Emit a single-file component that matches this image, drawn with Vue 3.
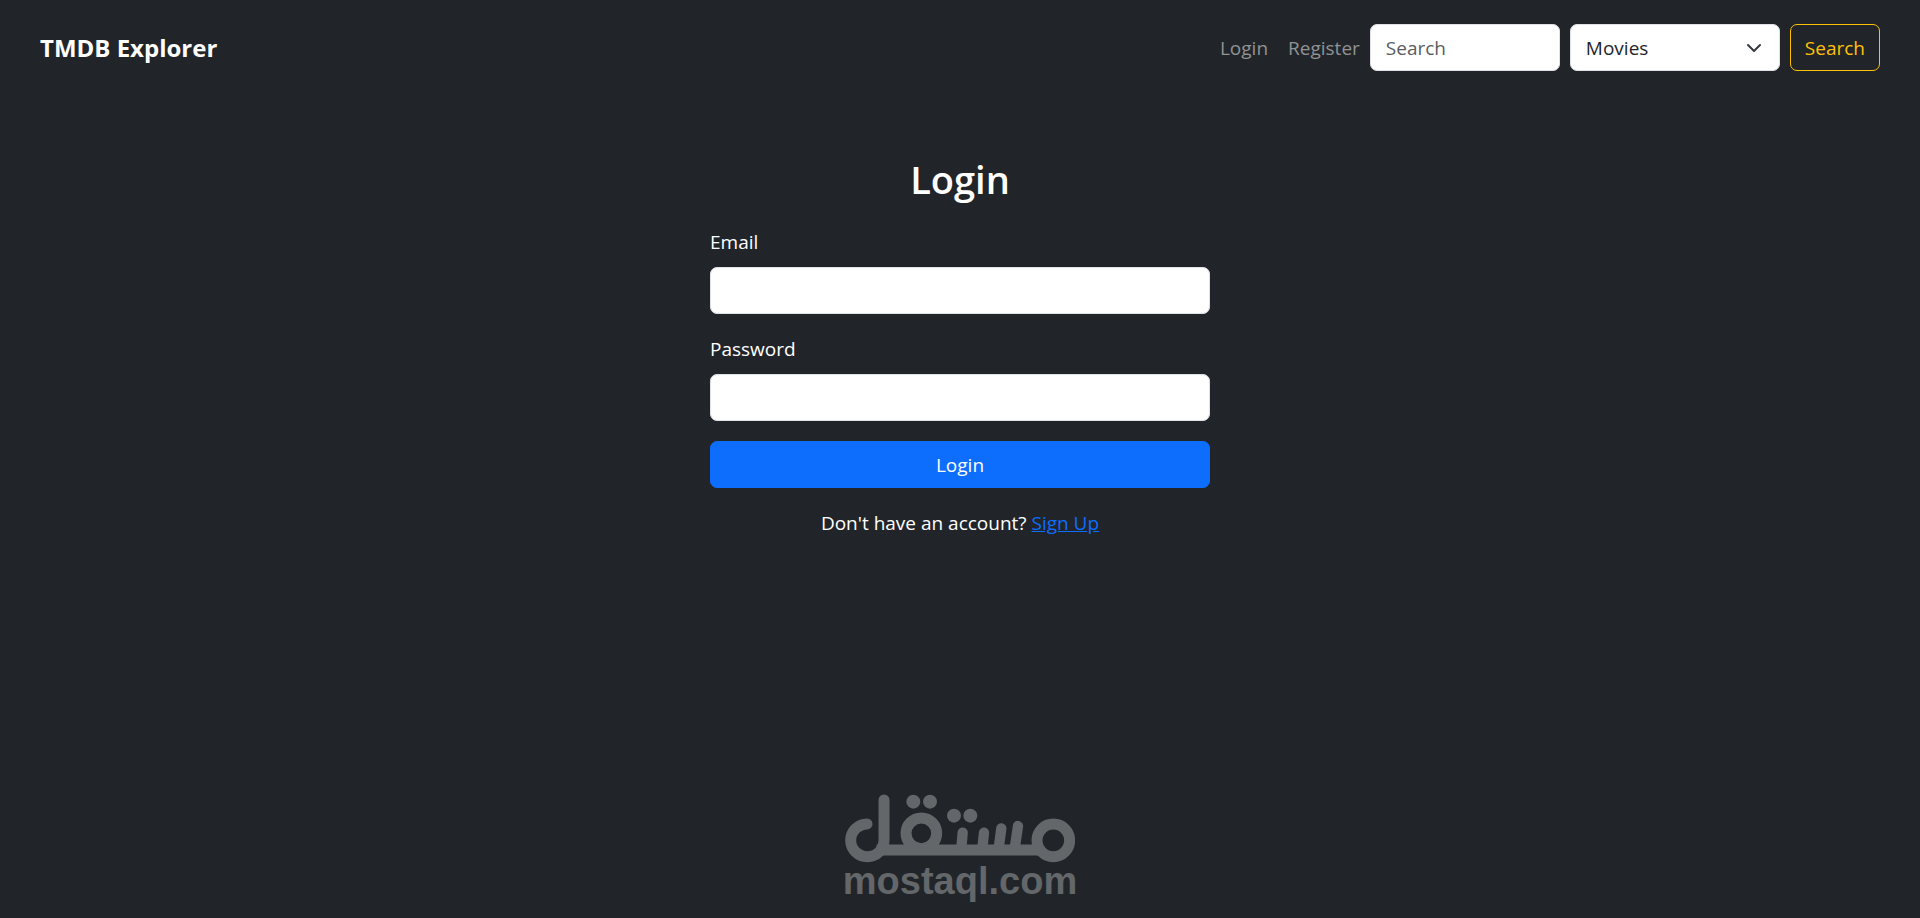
<script setup>
import { ref } from 'vue'

const query = ref('')
const kind = ref('movie')
const email = ref('')
const password = ref('')
</script>

<template>
  <div class="page">
    <header class="navbar">
      <a class="brand" href="#">TMDB Explorer</a>
      <nav class="links">
        <a href="#login">Login</a>
        <a href="#register">Register</a>
      </nav>
      <form class="search" @submit.prevent>
        <input v-model="query" class="control query" type="search" placeholder="Search" aria-label="Search" />
        <div class="select-wrap">
          <select v-model="kind" class="control kind" aria-label="Search type">
            <option value="movie">Movies</option>
            <option value="tv">TV Shows</option>
          </select>
          <svg class="chevron" viewBox="0 0 16 16" aria-hidden="true">
            <path d="m2 5 6 6 6-6" />
          </svg>
        </div>
        <button class="btn btn-outline" type="submit">Search</button>
      </form>
    </header>

    <main class="login">
      <h2>Login</h2>
      <form @submit.prevent>
        <div class="field">
          <label for="email">Email</label>
          <input id="email" v-model="email" class="control" type="email" />
        </div>
        <div class="field">
          <label for="password">Password</label>
          <input id="password" v-model="password" class="control" type="password" />
        </div>
        <button class="btn btn-primary" type="submit">Login</button>
      </form>
      <p>Don't have an account? <a href="#register">Sign Up</a></p>
    </main>

    <footer class="mark">
      <svg viewBox="45 40 690 206" role="img" aria-label="مستقل">
        <g class="strokes">
          <path d="M111 130A50 49 0 1 0 162 179V58" />
          <path class="base" d="M140 208H632" />
          <circle cx="670" cy="179" r="49" />
          <circle cx="274" cy="158" r="46" />
          <path class="tooth" d="M398 156l-4 48M462 156l-5 48M514 143l-8 61M564 136l-10 68" />
        </g>
        <g class="dots">
          <circle cx="250" cy="63" r="21" />
          <circle cx="300" cy="63" r="21" />
          <circle cx="372" cy="105" r="21" />
          <circle cx="421" cy="105" r="21" />
        </g>
      </svg>
      <span>mostaql.com</span>
    </footer>
  </div>
</template>

<style>
body {
  margin: 0;
  background: #212529;
}
</style>

<style scoped>
.page {
  box-sizing: border-box;
  display: flex;
  flex-direction: column;
  min-height: 100vh;
  background: #212529;
  color: #fff;
  font-family: "Segoe UI", "Open Sans", "Noto Sans", sans-serif;
  font-size: 19px;
  line-height: 30px;
}

.navbar {
  display: flex;
  align-items: center;
  padding: 24px 40px;
}

.brand {
  margin-right: auto;
  color: #fff;
  font-size: 24px;
  font-weight: 700;
  text-decoration: none;
}

.links {
  display: flex;
  gap: 20px;
  margin-right: 10px;
}

.links a {
  color: #909294;
  text-decoration: none;
}

.search {
  display: flex;
  gap: 10px;
}

.control {
  box-sizing: border-box;
  display: block;
  width: 100%;
  height: 47px;
  margin: 0;
  padding: 0 15px;
  border: 1px solid #dee2e6;
  border-radius: 7px;
  background: #fff;
  color: #212529;
  font: inherit;
  appearance: none;
}

.control::placeholder {
  color: #595c5f;
  opacity: 1;
}

.query {
  width: 190px;
}

.select-wrap {
  position: relative;
  width: 210px;
}

.chevron {
  position: absolute;
  top: 16px;
  right: 18px;
  width: 16px;
  height: 16px;
  fill: none;
  stroke: #343a40;
  stroke-width: 2;
  stroke-linecap: round;
  stroke-linejoin: round;
  pointer-events: none;
}

.btn {
  height: 47px;
  padding: 0 14px;
  border: 1px solid;
  border-radius: 7px;
  font: inherit;
  cursor: pointer;
}

.btn-outline {
  border-color: #ffc107;
  background: transparent;
  color: #ffc107;
}

.btn-primary {
  display: block;
  width: 100%;
  border-color: #0d6efd;
  background: #0d6efd;
  color: #fff;
}

.login {
  width: 100%;
  max-width: 500px;
  margin: 60px auto 0;
}

.login h2 {
  margin: 0 0 24px;
  font-size: 38px;
  font-weight: 600;
  line-height: 48px;
  text-align: center;
}

.field {
  margin-bottom: 20px;
}

.field label {
  display: block;
  margin-bottom: 10px;
}

.login p {
  margin: 20px 0;
  text-align: center;
}

.login a {
  color: #0d6efd;
  text-decoration: underline;
}

.mark {
  display: flex;
  flex-direction: column;
  align-items: center;
  margin-top: auto;
  padding-bottom: 19px;
  color: #64676a;
  font-family: "Liberation Sans", Arial, sans-serif;
  font-size: 38px;
  font-weight: 700;
  line-height: 36px;
}

.mark svg {
  width: 230px;
}

.strokes {
  fill: none;
  stroke: #64676a;
  stroke-width: 33;
  stroke-linecap: round;
}

.base {
  stroke-linecap: butt;
}

.tooth {
  stroke-width: 31;
}

.dots {
  fill: #64676a;
}
</style>
